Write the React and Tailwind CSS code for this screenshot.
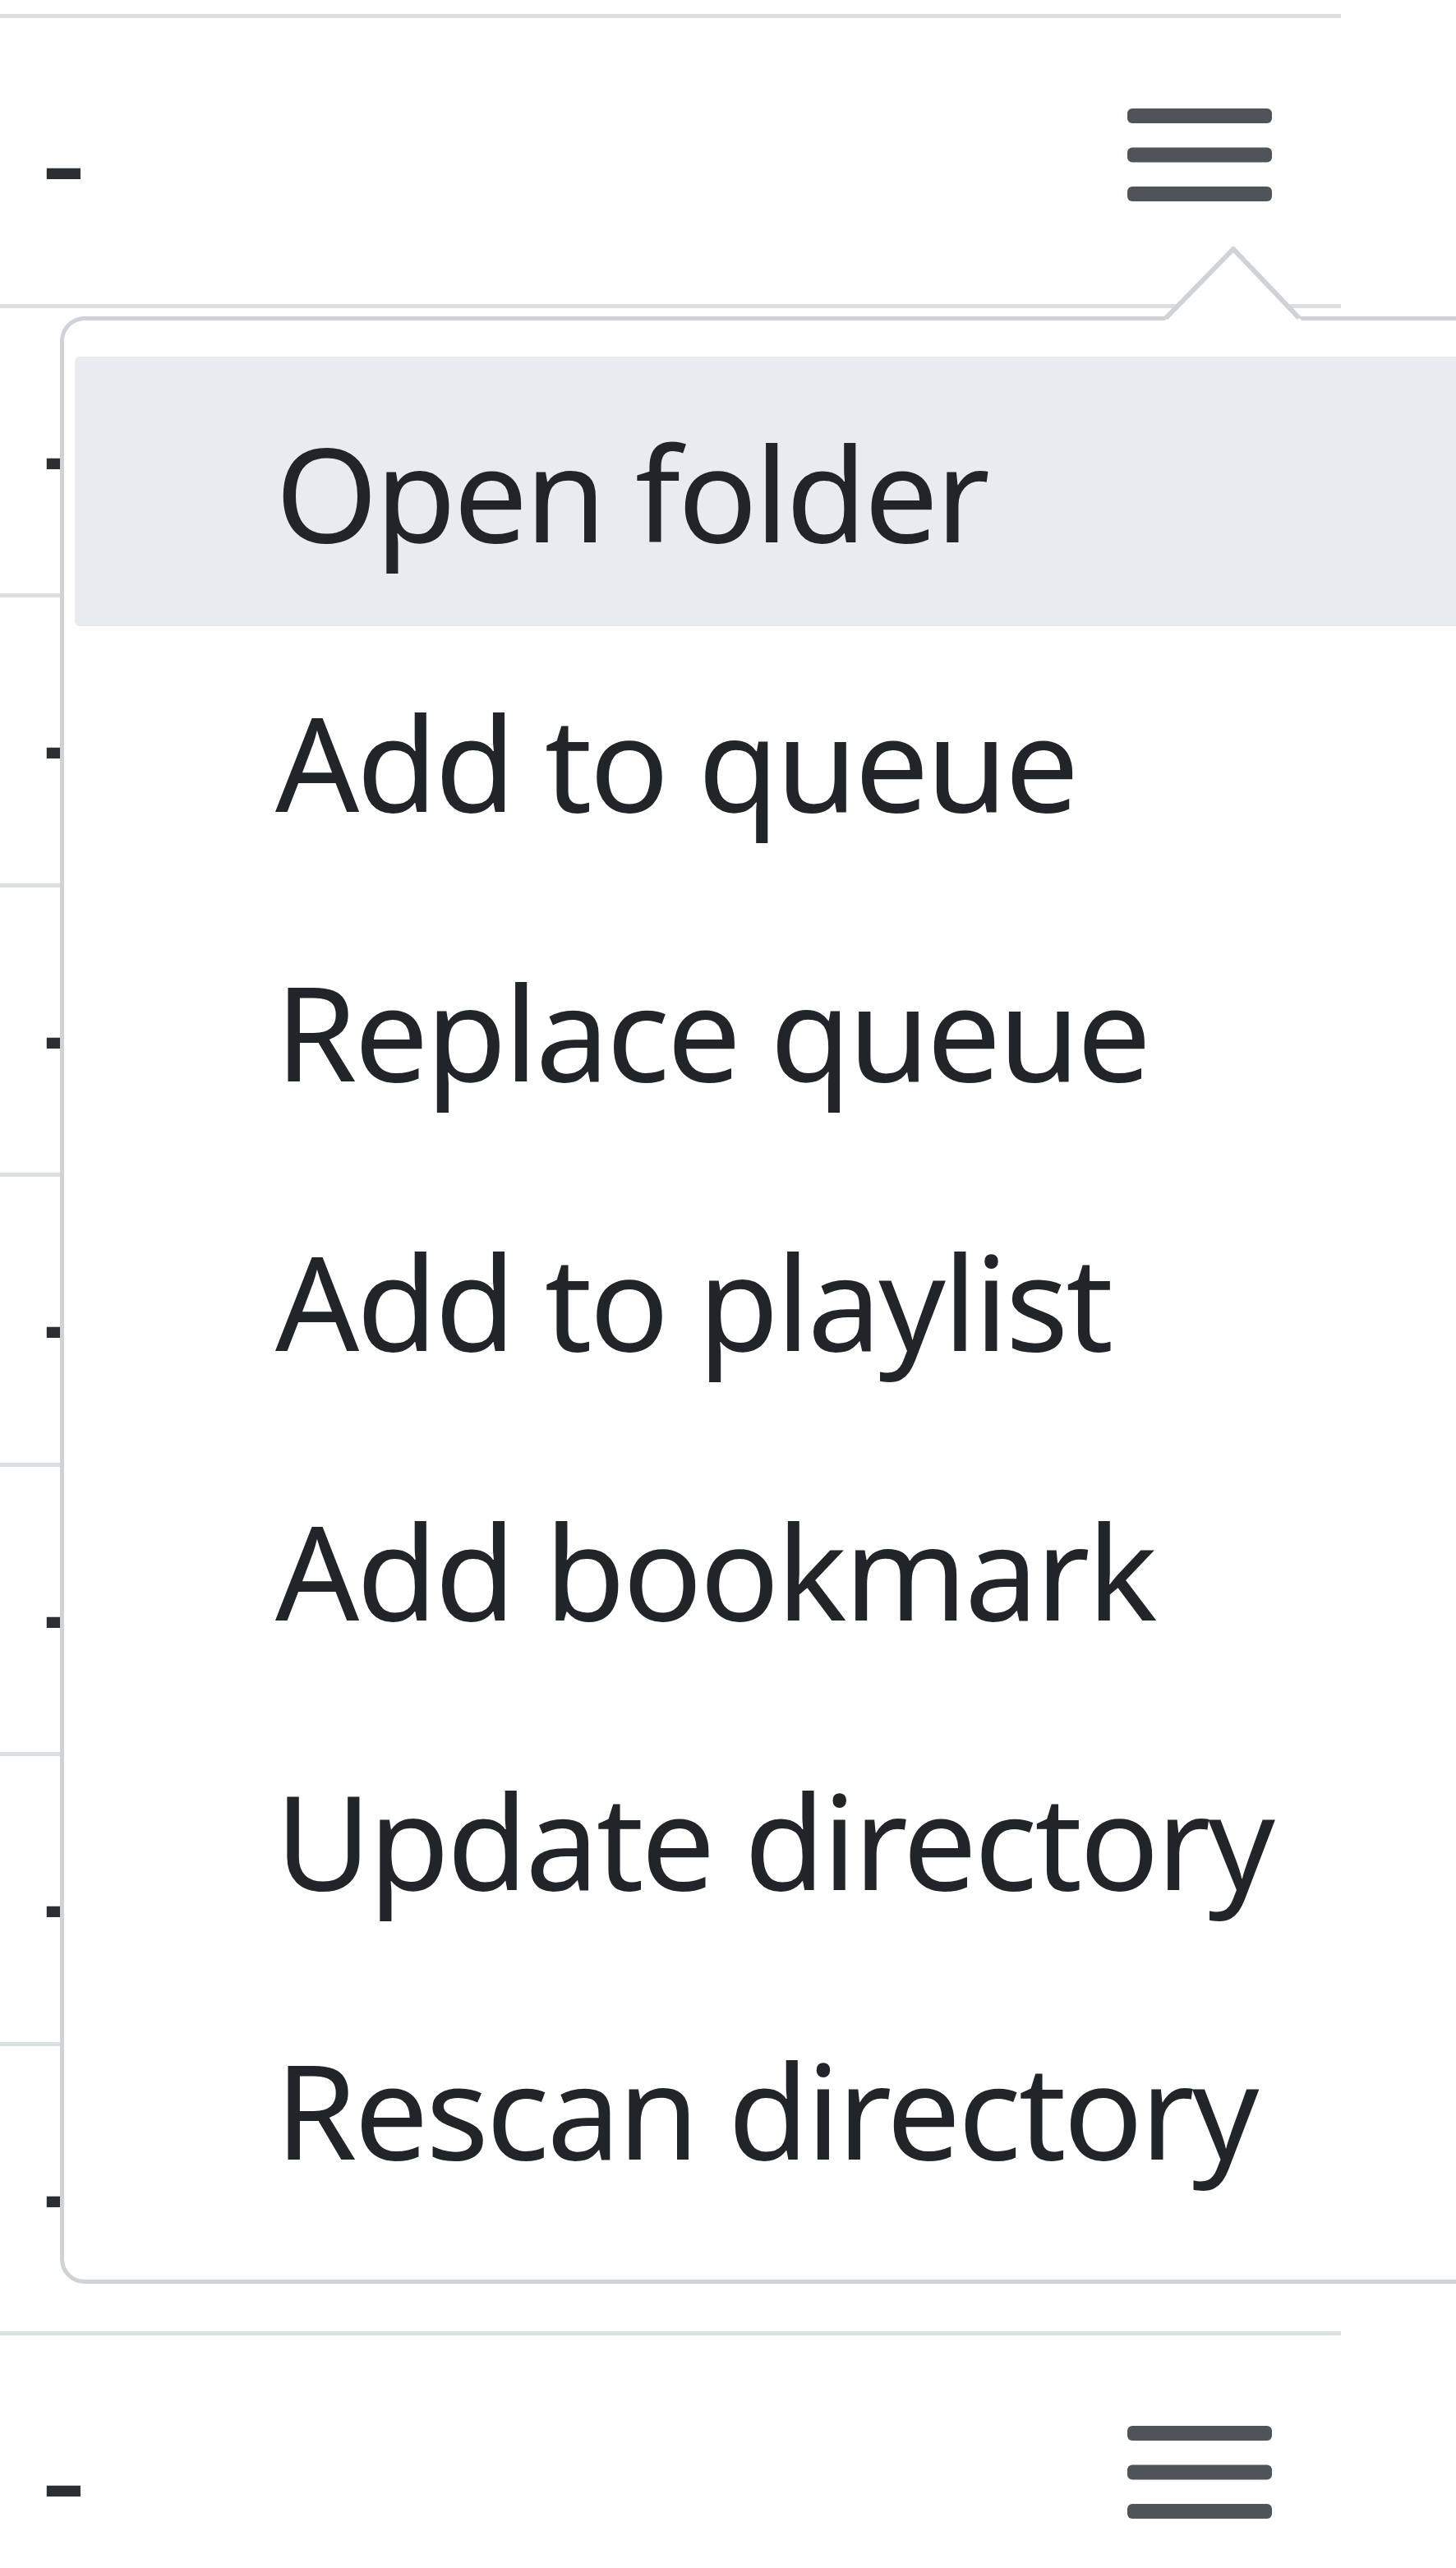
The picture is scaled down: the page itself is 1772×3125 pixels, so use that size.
import React from "react";

const items = [
  "Open folder",
  "Add to queue",
  "Replace queue",
  "Add to playlist",
  "Add bookmark",
  "Update directory",
  "Rescan directory",
];

const rows = Array.from({ length: 9 }, (_, i) => i);

const ListIcon = () => (
  <svg width="176" height="113" viewBox="0 0 176 113" aria-hidden>
    <rect x="0" y="0" width="176" height="18" rx="6" fill="#4f545a" />
    <rect x="0" y="47.5" width="176" height="18" rx="6" fill="#4f545a" />
    <rect x="0" y="95" width="176" height="18" rx="6" fill="#4f545a" />
  </svg>
);

export default function App() {
  return (
    <div className="relative h-[3125px] w-[1772px] overflow-hidden bg-white font-['Noto_Sans',sans-serif] text-[#212529]">
      {/* table behind the menu */}
      <div className="pt-[17px]">
        <div className="w-[1632px] border-t-[5px] border-[#dcdfe2]">
          {rows.map(r => (
            <div
              key={r}
              className={
                "flex items-start justify-between pl-[50px] pr-[84px] " +
                (r < 8 ? "h-[352.5px] border-b-[5px] border-[#dcdfe2]" : "h-[280px]")
              }
            >
              <span className="mt-[84px] text-[170px] leading-none text-[#2b2f33]">-</span>
              <div className="mt-[110px]">
                <ListIcon />
              </div>
            </div>
          ))}
        </div>
      </div>

      {/* dropdown menu */}
      <div className="absolute left-[73px] top-[385px] w-[1760px] rounded-[30px] border-[5px] border-[#cfd2d6] bg-white py-[44px]">
        {items.map((it, i) => (
          <div
            key={it}
            className={
              "ml-[13px] h-[328px] whitespace-nowrap pl-[244px] text-[160px] leading-[328px] tracking-[-0.02em] " +
              (i === 0 ? "rounded-l-[6px] bg-[#e9ecef]" : "")
            }
          >
            {it}
          </div>
        ))}
      </div>

      {/* caret */}
      <svg className="absolute left-[1416px] top-[298px]" width="170" height="94" viewBox="0 0 170 94" aria-hidden>
        <polygon points="0,94 85,5 170,94" fill="white" />
        <polyline points="3,89 85,5 165,89" fill="none" stroke="#cfd2d6" strokeWidth="6" strokeLinejoin="round" />
      </svg>
    </div>
  );
}
